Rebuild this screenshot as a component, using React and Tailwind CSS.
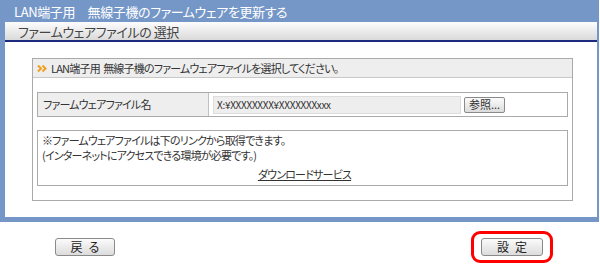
import React from 'react'

const jp = {
  fontFamily: '"MS PGothic", "Noto Sans CJK JP", "Liberation Sans", sans-serif',
  fontFeatureSettings: '"palt"',
}

function Chevrons() {
  return (
    <svg width="11" height="9" viewBox="0 0 11 9" className="shrink-0">
      <path d="M1 1.5 L4 4.5 L1 7.5" fill="none" stroke="#f0a020" strokeWidth="2" />
      <path d="M5.5 1.5 L8.5 4.5 L5.5 7.5" fill="none" stroke="#f0a020" strokeWidth="2" />
    </svg>
  )
}

function GrayButton({ children, className = '' }) {
  return (
    <button
      className={`h-[18px] rounded-[3px] border border-[#8a8a8a] bg-gradient-to-b from-[#fbfbfb] to-[#dcdcdc] text-[12px] text-[#222] leading-none tracking-[6px] pl-[6px] ${className}`}
      style={jp}
    >
      {children}
    </button>
  )
}

export default function App() {
  return (
    <div className="w-[600px] h-[266px] bg-white overflow-hidden" style={jp}>
      {/* Frame */}
      <div className="w-[599px] bg-[#7597c7] pl-[5px] pr-[2px] pb-[5px]">
        <div className="h-[22px] flex items-center pl-[9px] text-white text-[13px] tracking-[-0.4px] leading-none">
          LAN端子用　無線子機のファームウェアを更新する
        </div>
        <div className="h-[20px] bg-gradient-to-b from-[#fdfdfd] to-[#dadada] border-b-2 border-[#1c2a80] flex items-center pl-[13px] text-[13px] tracking-[-0.4px] text-[#444] leading-none">
          ファームウェアファイルの 選択
        </div>
        <div className="h-[175px] bg-white pt-[16px] pl-[27px]">
          <div className="w-[541px] border border-[#aaaaaa] pb-[14px]">
            <div className="h-[19px] bg-[#eeeeee] border-b border-[#c8c8c8] flex items-center gap-[3px] pl-[4px] text-[11px] tracking-[-0.8px] text-[#333] leading-none">
              <Chevrons />
              <span>LAN端子用&nbsp;&nbsp;無線子機のファームウェアファイルを選択してください。</span>
            </div>
            <div className="px-[4px] pt-[14px] flex flex-col gap-[13px]">
              <div className="h-[25px] border border-[#aaaaaa] flex">
                <div className="w-[171px] bg-[#eeeeee] border-r border-[#c0c0c0] flex items-center pl-[5px] text-[11px] tracking-[-0.8px] text-[#333]">
                  ファームウェアファイル名
                </div>
                <div className="flex items-center pl-[4px] gap-[3px]">
                  <div className="w-[248px] h-[18px] bg-[#eeeeee] border border-[#dcdcdc] flex items-center pl-[3px] text-[10px] text-[#333] leading-none tracking-[-0.3px]">
                    X:¥XXXXXXXX¥XXXXXXXxxx
                  </div>
                  <button className="w-[41px] h-[16px] rounded-[2px] border border-[#8a8a8a] bg-gradient-to-b from-[#fbfbfb] to-[#dcdcdc] text-[11px] text-[#333] leading-none">
                    参照...
                  </button>
                </div>
              </div>
              <div className="h-[56px] border border-[#aaaaaa] flex flex-col pl-[4px] pt-[2px] text-[11px] tracking-[-0.8px] text-[#333] leading-[15px]">
                <div>※ファームウェアファイルは下のリンクから取得できます。</div>
                <div>(インターネットにアクセスできる環境が必要です。)</div>
                <div className="mt-auto mb-[3px] self-center underline">ダウンロードサービス</div>
              </div>
            </div>
          </div>
        </div>
      </div>
      {/* Buttons */}
      <div className="flex items-center justify-between pl-[55px] pr-[47px] pt-[9px]">
        <GrayButton className="w-[60px]">戻る</GrayButton>
        <div className="w-[82px] h-[32px] rounded-[9px] border-[3px] border-[#ff0000] flex items-center justify-center">
          <GrayButton className="w-[62px]">設定</GrayButton>
        </div>
      </div>
    </div>
  )
}
